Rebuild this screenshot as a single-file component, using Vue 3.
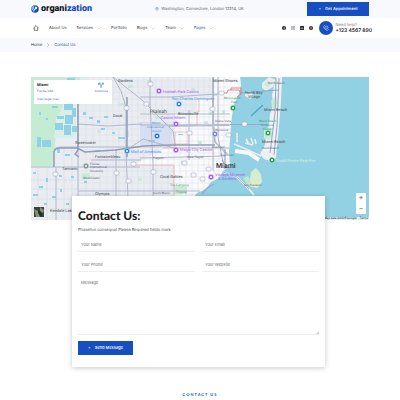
<script setup>
const links = [
  { text: 'About Us' },
  { text: 'Services', menu: true },
  { text: 'Portfolio' },
  { text: 'Blogs', menu: true },
  { text: 'Team', menu: true },
  { text: 'Pages', menu: true, active: true },
]

const ponds = [
  [64, 103, 9, 7], [57, 116, 7, 3], [65, 115, 8, 9], [55, 123, 8, 7], [64, 125, 7, 10], [72, 126, 5, 6],
  [37, 137, 4, 10], [42, 140, 9, 7], [39, 112, 2, 3], [46, 118, 2, 2], [67, 78, 8, 3], [52, 106, 6, 2],
  [72, 108, 4, 9], [89, 117, 4, 2], [97, 120, 3, 3], [104, 116, 4, 2], [101, 128, 4, 2], [83, 112, 3, 3],
  [33, 172, 3, 2], [39, 186, 4, 2], [46, 178, 2, 4], [33, 194, 5, 2], [52, 196, 4, 2], [60, 189, 2, 3],
  [66, 203, 3, 2], [59, 175, 3, 2], [44, 203, 3, 2], [71, 176, 3, 2], [57, 149, 3, 4], [65, 154, 5, 2],
  [118, 137, 7, 2], [112, 132, 3, 2], [95, 150, 5, 2], [84, 181, 3, 2], [178, 134, 5, 1], [149, 140, 6, 2],
]

const parks = [
  [97, 130, 4, 3], [125, 131, 4, 6], [82, 173, 8, 6], [147, 80, 5, 3], [155, 116, 6, 3], [204, 121, 4, 3],
  [181, 161, 6, 4], [191, 88, 4, 3], [222, 110, 3, 4], [173, 186, 14, 8], [138, 178, 4, 3], [213, 94, 4, 2],
  [128, 85, 5, 3], [119, 103, 5, 3], [198, 141, 4, 3], [209, 112, 4, 3],
]

const streetsX = [
  86, 93, 100, 107, 113, 119, 125, 132, 138, 144, 150, 156, 162, 168, 174, 180, 186, 192, 198, 204, 209, 214, 219, 224,
]
const streetsY = [81, 87, 93, 99, 105, 111, 117, 123, 129, 135, 141, 147, 153, 159, 165, 171, 177, 183, 189, 195, 201, 207, 213]

const labels = [
  ['Miami', 216, 168, 'city'], ['Hialeah', 150, 113, 'town'], ['Doral', 113, 117, 'place'],
  ['Sweetwater', 75, 144, 'place'], ['Fontainebleau', 95, 158, 'place'], ['Tamiami', 62, 170, 'place'],
  ['Olympia', 95, 195, 'place'], ['Gardens', 118, 82, 'place'],
  ['Brownsville', 178, 115, 'place'], ['Coral Gables', 160, 178, 'place'], ['Miami Shores', 213, 82, 'place'],
  ['North Bay', 245, 94, 'place'], ['Village', 248, 98, 'place'], ['Miami Beach', 264, 111, 'place'],
  ['Miami Beach', 262, 143, 'place'], ['North Beach', 268, 84, 'small'], ['South Beach', 262, 149, 'small'],
  ['Florida', 90, 165, 'small'], ['International', 90, 168, 'small'], ['University', 90, 172, 'small'],
  ['Westchester', 83, 179, 'small'], ['Buena Vista', 215, 122, 'small'], ['Wynwood', 215, 131, 'small'],
  ['Overtown', 212, 148, 'small'], ['Flagami', 153, 159, 'small'], ['West Flagler', 187, 158, 'small'],
  ['Downtown', 220, 156, 'small'], ['South Miami', 153, 194, 'small'], ['Key Biscayne', 244, 186, 'small'],
  ['The Kampong', 170, 186, 'park'], ['Tropical', 176, 193, 'park'], ['Miami Beach', 259, 122, 'park'],
  ['Botanical', 261, 126, 'park'], ['Garden', 263, 130, 'park'], ['Morningside', 224, 99, 'park'],
  ['Park', 231, 103, 'park'], ['South Pointe Park Pier', 276, 162, 'beach'],
  ['Hialeah Park Casino', 163, 93, 'fun'], ['Casino Miami', 161, 119, 'fun'],
  ['Magic City Casino', 180, 151, 'fun'], ['Vizcaya Museum', 215, 176, 'fun'], ['& Gardens', 218, 180, 'fun'],
  ['Roy Charles Dominguez', 172, 100, 'shop'], ['Miami', 152, 124, 'airport'],
  ['International', 147, 128, 'airport'], ['Airport', 152, 132, 'airport'], ['Mall of Americas', 131, 153, 'shop'],
  ['Kendale Lakes', 50, 212, 'place'],
]

const pins = [
  [159, 91, '#a35cf0'], [176, 124, '#a35cf0'], [176, 150, '#a35cf0'], [211, 177, '#a35cf0'],
  [179, 104, '#3186ed'], [157, 136, '#2475d8'], [127, 151, '#2b8def'], [215, 134, '#7788c6'],
  [233, 108, '#279b59'], [268, 133, '#279b59'], [272, 160, '#279b59'], [86, 166, '#858d99'],
]

const shields = [
  [150, 84], [126, 108], [146, 104], [55, 174], [116, 173], [128, 181], [153, 172], [184, 163],
  [193, 175], [202, 179], [208, 169], [221, 93], [189, 133], [228, 135], [244, 124], [212, 109], [133, 164],
]
</script>

<template>
  <header>
    <div class="topbar">
      <div class="wrap topbar-row">
        <a class="brand" href="#">
          <svg class="brand-mark" viewBox="0 0 16 16" aria-hidden="true">
            <circle cx="8" cy="8" r="7.5" fill="#174fc0" />
            <path d="M1 7C1 3 4 1 8 1 5 3 7 6 5 9S2 11 1 7Z" fill="#8fb2f2" />
            <path d="M9 3c3 0 4 2 3 4s-4 1-5 4-3 2-3 2 1-3 3-5 0-4 2-5Z" fill="#fff" />
            <path d="M14 8c0 4-3 6-6 6 3-1 3-4 6-6Z" fill="#0b2f80" />
          </svg>
          <span class="brand-name">organi<b>zation</b></span>
        </a>
        <p class="address">
          <svg viewBox="0 0 12 12" aria-hidden="true">
            <path d="M6 11C3 8 2 6.500 2 4.800a4 4 0 0 1 8 0C10 6.500 9 8 6 11Z" fill="none" stroke="#174fc0" />
            <circle cx="6" cy="5" r="1.500" fill="none" stroke="#174fc0" />
          </svg>
          Washington, Consecture, London 12214, UK
        </p>
        <a class="btn appointment" href="#"><span>+</span> Get Appointment</a>
      </div>
    </div>
    <div class="wrap navbar">
      <nav>
        <a class="home" href="#" aria-label="Home">
          <svg viewBox="0 0 14 14" aria-hidden="true">
            <path d="M1 7.500 7 1.500l6 6M3 6v6.500h8V6" fill="none" stroke="#222" stroke-width="1.400" />
          </svg>
        </a>
        <a v-for="l in links" :key="l.text" href="#" :class="{ active: l.active }">
          {{ l.text }}
          <svg v-if="l.menu" class="chev" viewBox="0 0 8 8" aria-hidden="true">
            <path d="m1 3 3 3 3-3" fill="none" stroke="#b4b8bf" />
          </svg>
        </a>
      </nav>
      <div class="social">
        <a href="#" aria-label="Facebook">
          <svg viewBox="0 0 16 16"><circle cx="8" cy="8" r="8" fill="#1b1d22" /><path d="M8.500 15V6q0-2 2.500-2M5.500 8.500h5" fill="none" stroke="#fff" stroke-width="2" /></svg>
        </a>
        <a href="#" aria-label="Instagram">
          <svg viewBox="0 0 16 16" fill="none" stroke="#33363c" stroke-width="1.500"><rect x="1" y="1" width="14" height="14" rx="4" /><circle cx="8" cy="8" r="3.200" /><circle cx="12" cy="4" r=".5" /></svg>
        </a>
        <a href="#" aria-label="LinkedIn">
          <svg viewBox="0 0 16 16"><rect width="16" height="16" rx="2" fill="#1b1d22" /><path d="M4 6.500V13M4 3v2M7.500 13V6.500M7.500 9.500q0-2.500 2.500-2.500t2.500 2.500V13" fill="none" stroke="#fff" stroke-width="1.800" /></svg>
        </a>
        <a href="#" aria-label="Pinterest">
          <svg viewBox="0 0 16 16"><circle cx="8" cy="8" r="8" fill="#1b1d22" /><path d="m6.500 14 2-8M5 8.500C3.500 5 6 3.500 8 3.500c4 0 4 6.500 1 6.500q-1.500 0-2-1" fill="none" stroke="#fff" stroke-width="1.500" /></svg>
        </a>
      </div>
      <div class="help">
        <span class="help-icon">
          <svg viewBox="0 0 16 16" aria-hidden="true">
            <path d="M4.500 1.500 1.800 4c0 5 5 10 10.200 10.200l2.500-2.700-3.500-2.800-2 1.600C7.500 9.500 6.500 8.500 5.700 7l1.600-2ZM9 2q4.500.5 5 5M9 4.500q2.200.3 2.500 2.500" fill="none" stroke="#fff" stroke-width="1.200" />
          </svg>
        </span>
        <p><small>Need help?</small><strong>+123 4567 890</strong></p>
      </div>
    </div>
    <div class="crumbs">
      <div class="wrap crumb-row">
        <a href="#">Home</a>
        <svg class="chev" viewBox="0 0 8 8" aria-hidden="true"><path d="m2 0 4 4-4 4" fill="none" stroke="#8a8f99" /></svg>
        <a class="active" href="#">Contact Us</a>
      </div>
    </div>
  </header>

  <main>
    <section class="map">
      <svg class="map-art" viewBox="31 77 338 143" role="img" aria-label="Map of Miami">
        <rect x="31" y="77" width="338" height="143" fill="#e9ecf1" />
        <path d="M213 77h30v100l-40 43h-29v-55h-41l30-16h12v-36h22v-14h16Z" fill="#f9fafc" />
        <path d="M31 77H80V104H63V112L56 118V134L53 166H31Z" fill="#c3ecd3" />
        <path d="M80 77h8v27h-8zM63 104h13v34H54l3-18Z" fill="#dcefe6" />
        <path d="M140 122h27l5 10v16h-32Z" fill="#d6def3" />
        <rect v-for="(p, i) in parks" :key="'g' + i" :x="p[0]" :y="p[1]" :width="p[2]" :height="p[3]" fill="#c6ecd6" />
        <g stroke="#d9dde7" stroke-width=".5">
          <line v-for="x in streetsX" :key="'x' + x" :x1="x" y1="77" :x2="x" y2="220" />
          <line v-for="y in streetsY" :key="'y' + y" x1="78" :y1="y" x2="240" :y2="y" />
        </g>
        <path d="M31 180h56M31 189h56M31 199h56M31 209h56M38 167v53M47 167v53M64 148v72M72 148v72" stroke="#d3d8e3" stroke-width=".5" />
        <rect v-for="(p, i) in ponds" :key="'w' + i" :x="p[0]" :y="p[1]" :width="p[2]" :height="p[3]" fill="#90d2e5" />
        <path d="M163 148h12v-16h13v12h-16M199 100v12h-2v13h-24M133 165h41v31" fill="none" stroke="#f0a6a6" stroke-width=".7" />

        <g fill="none" stroke="#b1b8cc" stroke-width="1">
          <path d="M78 104V220M31 167H140M56 167v53M54 150q1-3 8-3H140M78 124l30 2 34-2M113 77l8 14 5 16v45l3 68M150 77v26l3 60v57M78 191H200M131 147l12-8 31 9h55M116 150v54M140 97h30l48-3M113 77l29 23 13 13 18 18 2 14M140 114h90M213 77v94M218 77v60l5 25M140 125h90M189 110v50M140 158l85-2M91 160h50" />
        </g>
        <g fill="none" stroke="#929cbb" stroke-width="1.500">
          <path d="M213 77v45l2 20 12 12M54 167v-15q1-4 6-4h17l8 4 30-2 29-4 27-1h44M78 104v46M127 97v60M169 126l60-1M78 150l-3 4 4 3" />
        </g>
        <g fill="none" stroke="#fff" stroke-width=".4"><path d="M213 77v45l2 20 12 12M169 126l60-1" /></g>

        <path d="M240 77 241 85 239 94 234 104 232 116 231 124 230 140 229 151 230 166 223 171 219 178 211 182 206 189 197 193 190 202 184 220H369V77Z" fill="#91d1e3" />
        <path d="M221 93h6l1-3h11l2 4M231 90v-2h10v6l-4 3" fill="none" stroke="#dc6c78" stroke-width=".8" />
        <path d="M276 77h6l-1 25-2 24-2 20-1 12-5 3-7-2-4-5 5-9 1-11 3-9 1-11 3-9-1-10Z" fill="#edf0f5" />
        <path d="M262 83l7-6 7 3-3 7-7 4-4-3ZM245 92l5-1 4 5-4 3-5-3Z" fill="#e7ecec" />
        <path d="M271 101l5-5 2 6-2 7-4-1ZM264 130l7-2 2 7-4 5-5-2ZM264 84l4-3 4 2-4 4-3-1Z" fill="#c9ead3" />
        <path d="m279 78-2 48-3 29M276 78l-1 35-5 40M230 124.500H268M240 93l38-3" fill="none" stroke="#9ca7c4" stroke-width="1" />
        <path d="M235 151l14 2 10 7" fill="none" stroke="#f8f8fa" stroke-width="4" />
        <path d="M234 144l12 5 15 7" fill="none" stroke="#e9edf3" stroke-width="1.500" />
        <path d="m246 139 3 5M251 138l2 6M255 139l1 5M237 133v9M245 143l8 2" fill="none" stroke="#edf0f5" stroke-width="1.500" />
        <path d="m256 168 5 6 1 8-4 6-7-1-5-4 4-4 1-7Z" fill="#d8edce" />
        <path d="m243 178 5-2 3 6-4 2Z" fill="#bfe6c9" />
        <path d="M223 172l14 5 12 12 5 6" fill="none" stroke="#eef0e9" stroke-width="1.800" />
        <path d="M223 172l14 5 12 12" fill="none" stroke="#9ca7c4" stroke-width=".8" />
        <path d="m251 116 12-11" stroke="#4eabc8" stroke-width="1.500" />
        <path d="M202 194l5-6 7-4M225 149v20M222 160l5 8" fill="none" stroke="#9ca7c4" stroke-width="1.200" />

        <g fill="#f8f9fc" stroke="#a0a8be" stroke-width=".6">
          <rect v-for="(s, i) in shields" :key="'s' + i" :x="s[0] - 2" :y="s[1] - 2" width="5" height="4" rx="1.500" />
        </g>
        <g v-for="(p, i) in pins" :key="'p' + i">
          <circle :cx="p[0]" :cy="p[1]" r="2.700" :fill="p[2]" stroke="#fff" stroke-width=".3" />
          <circle :cx="p[0]" :cy="p[1]" r="1" fill="#fff" />
        </g>
        <text v-for="(l, i) in labels" :key="'l' + i" :x="l[1]" :y="l[2]" :class="l[3]">{{ l[0] }}</text>
      </svg>

      <div class="place-card">
        <div class="place-info">
          <strong>Miami</strong>
          <span>Florida, USA</span>
          <a href="#">View larger map</a>
        </div>
        <a class="directions" href="#">
          <svg viewBox="0 0 16 16" aria-hidden="true"><path d="M8 16V9L3 4M8 10l5-6M2 8V3h5M10 3h4v4" fill="none" stroke="#2f72db" stroke-width="2" /></svg>
          Directions
        </a>
      </div>
      <button class="satellite" type="button" aria-label="Satellite view">
        <svg viewBox="0 0 10 10" aria-hidden="true"><rect width="10" height="10" fill="#33463c" /><path d="m0 2 4 2 2 6H2ZM6 0l4 3-1 3-3-2Z" fill="#8e8b6e" /><path d="M5 3 8 7 7 10 4 6Z" fill="#17302e" /></svg>
      </button>
      <div class="zoom">
        <button type="button" aria-label="Zoom in">+</button>
        <button type="button" aria-label="Zoom out">−</button>
      </div>
      <p class="credits"><span>Map data ©2025 Google</span><span>Terms</span></p>
    </section>

    <section class="card">
      <h1>Contact Us:</h1>
      <p class="intro">Phasellus consequat Please Required fields mark</p>
      <form @submit.prevent>
        <input type="text" placeholder="Your Name" aria-label="Your Name" />
        <input type="email" placeholder="Your Email" aria-label="Your Email" />
        <input type="tel" placeholder="Your Phone" aria-label="Your Phone" />
        <input type="url" placeholder="Your Website" aria-label="Your Website" />
        <div class="message">
          <textarea placeholder="Message" aria-label="Message"></textarea>
          <svg viewBox="0 0 6 6" aria-hidden="true"><path d="M1 6 6 1M4 6l2-2" stroke="#777" /></svg>
        </div>
        <button class="btn send" type="submit"><span>+</span> Send Message</button>
      </form>
    </section>

    <h2>CONTACT US</h2>
  </main>
</template>

<style>
body {
  margin: 0;
  background: #fff;
  overflow: hidden;
}
</style>

<style scoped>
header,
main {
  font-family: Inter, "Liberation Sans", sans-serif;
  font-size: 4px;
  line-height: 6px;
  color: #33363c;
  text-rendering: geometricPrecision;
}
header *,
main * {
  box-sizing: border-box;
}
a {
  color: inherit;
  text-decoration: none;
}
p {
  margin: 0;
}
svg {
  display: block;
  flex: none;
}
.wrap {
  padding: 0 31px;
}
.topbar,
.crumbs {
  background: #f7f9fc;
}
.topbar-row {
  display: flex;
  align-items: center;
  justify-content: space-between;
  height: 18px;
}
.brand {
  display: flex;
  align-items: center;
  gap: 2px;
}
.brand-mark {
  width: 8px;
  height: 8px;
}
.brand-name {
  font: 900 9px/10px Roboto, sans-serif;
  color: #16181d;
}
.brand-name b {
  font-weight: 900;
  color: #174fc0;
}
.address {
  display: flex;
  align-items: center;
  gap: 2px;
  color: #5c6068;
}
.address svg {
  width: 4px;
  height: 4px;
}
.btn {
  display: flex;
  align-items: center;
  justify-content: center;
  gap: 4px;
  height: 14px;
  border: 0;
  background: #174fc0;
  color: #fff;
  font: 500 4px/6px Inter, sans-serif;
}
.appointment {
  width: 62px;
}
.navbar {
  display: flex;
  align-items: center;
  height: 20px;
}
nav {
  display: flex;
  align-items: center;
  gap: 10px;
  flex: 1;
  padding-left: 2px;
}
nav a {
  display: flex;
  align-items: center;
  gap: 4px;
}
.home svg {
  width: 6px;
  height: 6px;
}
.active {
  color: #174fc0;
}
.chev {
  width: 4px;
  height: 4px;
}
.social {
  display: flex;
  gap: 5px;
  padding-right: 6px;
}
.social svg {
  width: 4px;
  height: 4px;
}
.help {
  display: flex;
  align-items: center;
  gap: 2px;
  margin-right: -3px;
}
.help-icon {
  display: grid;
  place-items: center;
  width: 14px;
  height: 14px;
  border-radius: 50%;
  background: #174fc0;
}
.help-icon svg {
  width: 6px;
  height: 6px;
}
.help small,
.help strong {
  display: block;
  white-space: nowrap;
}
.help small {
  font-size: 4px;
  color: #777b83;
}
.help strong {
  font-size: 5px;
  line-height: 7px;
  font-weight: 600;
  color: #1b1d22;
}
.crumb-row {
  display: flex;
  align-items: center;
  gap: 4px;
  height: 14px;
}
main {
  padding: 25px 31px 0;
}
.map {
  position: relative;
}
.map-art {
  width: 100%;
  height: auto;
}
.map-art text {
  font-family: Roboto, sans-serif;
  font-size: 4px;
  fill: #666b75;
}
.map-art .city {
  font-size: 7px;
  font-weight: 500;
  fill: #2f3238;
}
.map-art .town {
  font-size: 5px;
  fill: #44484f;
}
.map-art .place {
  fill: #44484f;
}
.map-art .small {
  font-size: 3px;
}
.map-art .park {
  fill: #38a36c;
  font-size: 3px;
}
.map-art .beach {
  fill: #d2f5e0;
}
.map-art .fun {
  fill: #a35cf0;
}
.map-art .shop {
  fill: #4b91e8;
}
.map-art .airport {
  fill: #4b91e8;
  font-size: 3px;
}
.place-card {
  position: absolute;
  left: 3px;
  top: 3px;
  display: flex;
  justify-content: space-between;
  width: 78px;
  height: 24px;
  padding: 2px 4px 2px 3px;
  background: #fff;
  font-family: Roboto, sans-serif;
}
.place-info {
  display: flex;
  flex-direction: column;
}
.place-info strong {
  color: #1b1d22;
}
.place-info span {
  font-size: 3px;
  color: #666b75;
}
.place-info a {
  margin-top: 2px;
  font-size: 3px;
}
.place-card a {
  color: #2f72db;
}
.directions {
  display: flex;
  flex-direction: column;
  align-items: center;
  font-size: 3px;
}
.directions svg {
  width: 6px;
  height: 6px;
}
.satellite {
  position: absolute;
  left: 3px;
  bottom: 3px;
  padding: 0;
  border: 0;
}
.satellite svg {
  width: 10px;
  height: 10px;
}
.zoom {
  position: absolute;
  right: 3px;
  bottom: 6px;
  display: grid;
  width: 10px;
  height: 21px;
  background: #fff;
}
.zoom button {
  padding: 0;
  border: 0;
  background: none;
  font: 8px/10px Roboto, sans-serif;
  color: #666;
}
.credits {
  position: absolute;
  right: 0;
  bottom: 0;
  display: flex;
  gap: 3px;
  padding: 0 1px;
  background: #d9eff5;
  color: #222;
  font: 3px/3px Roboto, sans-serif;
}
.card {
  position: relative;
  margin: -24px 44px 0 41px;
  padding: 12px 6px 12px;
  background: #fff;
  box-shadow: 0 1px 5px rgba(0, 0, 0, 0.22);
}
h1 {
  margin: 0;
  font: 900 12px/16px Lato, sans-serif;
  color: #1b1d22;
}
.intro {
  margin-top: 3px;
  color: #4b4f57;
}
form {
  display: grid;
  grid-template-columns: 1fr 1fr;
  column-gap: 7px;
  row-gap: 6px;
  margin-top: 5px;
}
input,
textarea {
  display: block;
  width: 100%;
  margin: 0;
  padding: 0 3px;
  border: 0;
  border-bottom: 1px solid #eeeff1;
  outline: 0;
  background: none;
  color: #33363c;
  font: 4px/6px Inter, sans-serif;
}
input {
  height: 14px;
}
textarea {
  height: 59px;
  padding-top: 4px;
  resize: none;
}
::placeholder {
  color: #6b6f76;
  opacity: 1;
}
.message {
  position: relative;
  grid-column: 1 / -1;
  margin-top: -2px;
}
.message svg {
  position: absolute;
  right: 0;
  bottom: 1px;
  width: 3px;
  height: 3px;
}
.send {
  width: 55px;
}
h2 {
  margin: 25px 0 0;
  text-align: center;
  font: 700 4px/6px Lato, sans-serif;
  letter-spacing: 1px;
  color: #174fc0;
}
</style>
